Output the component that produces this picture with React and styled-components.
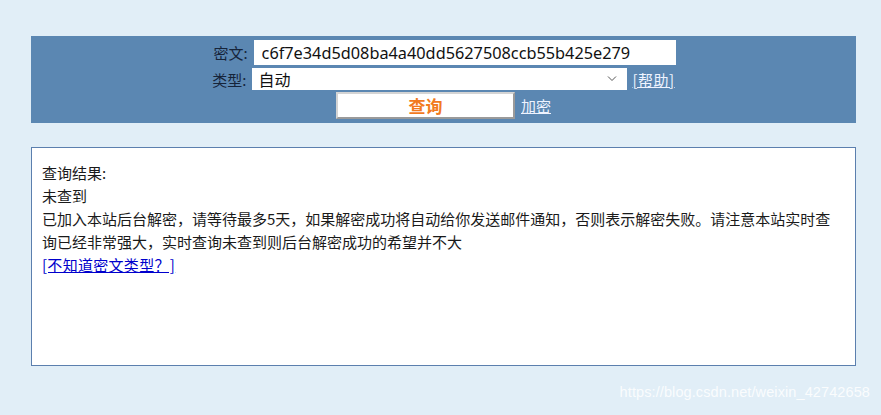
import React from "react";
import styled, { createGlobalStyle } from "styled-components";

const Global = createGlobalStyle`
  html, body { margin: 0; padding: 0; }
  body {
    background: #e1eef7;
    font-family: "Noto Sans CJK SC", "Noto Sans", sans-serif;
    color: #1b1b1b;
  }
`;

const Page = styled.div`
  position: relative;
  width: 881px;
  height: 415px;
  padding: 36px 25px 0 31px;
  box-sizing: border-box;
  display: flex;
  flex-direction: column;
  gap: 24px;
`;

const Panel = styled.form`
  background: #5b87b2;
  height: 87px;
  box-sizing: border-box;
  padding-top: 4px;
  display: flex;
  flex-direction: column;
  align-items: center;
`;

const Row = styled.div`
  display: flex;
  align-items: center;
  height: ${(p) => p.$h}px;
  margin-bottom: ${(p) => p.$mb || 0}px;
  gap: ${(p) => p.$gap || 0}px;
  transform: translateX(${(p) => p.$dx || 0}px);
`;

const Label = styled.label`
  font-size: 15px;
  line-height: 1;
  color: #16243a;
  margin-right: ${(p) => p.$mr}px;
`;

const TextInput = styled.input`
  width: 422px;
  height: 25px;
  box-sizing: border-box;
  border: none;
  outline: none;
  background: #fff;
  padding: 0 0 0 8px;
  font-family: "Noto Sans", sans-serif;
  font-size: 16.3px;
  color: #111;
`;

const SelectBox = styled.div`
  position: relative;
  width: 375px;
  height: 22px;
  background: #fff;
  display: flex;
  align-items: center;
  padding-left: 7px;
  box-sizing: border-box;
  font-size: 16px;
  color: #111;
`;

const Chevron = styled.svg`
  position: absolute;
  right: 10px;
  top: 7px;
`;

const Link = styled.a`
  font-size: ${(p) => p.$fs || 15}px;
  color: ${(p) => p.$color || "#eef3ff"};
  text-decoration: underline;
  cursor: pointer;
  line-height: 1;
  margin-left: ${(p) => p.$ml || 0}px;
`;

const QueryButton = styled.button`
  width: 179px;
  height: 27px;
  box-sizing: border-box;
  background: #fff;
  border: 2px solid #d4d4d4;
  border-right-color: #9a9a9a;
  border-bottom-color: #9a9a9a;
  font-family: "Noto Sans CJK SC", sans-serif;
  font-weight: 700;
  font-size: 17px;
  color: #f27a1e;
  padding: 0;
  line-height: 1;
`;

const Result = styled.div`
  height: 219px;
  box-sizing: border-box;
  background: #fff;
  border: 1px solid #5b7fae;
  padding: 13px 20px 10px 10px;
  font-size: 15px;
  line-height: 23px;
  color: #1a1a1a;
`;

const Line = styled.div``;

const Watermark = styled.div`
  position: absolute;
  right: 11px;
  top: 384px;
  font-family: "Liberation Sans", Arial, sans-serif;
  font-size: 14.5px;
  color: rgba(255, 255, 255, 0.85);
  letter-spacing: 0.1px;
`;

export default function App() {
  return (
    <>
      <Global />
      <Page>
        <Panel onSubmit={(e) => e.preventDefault()}>
          <Row $h={25} $mb={3} $dx={1}>
            <Label $mr={6}>密文:</Label>
            <TextInput defaultValue="c6f7e34d5d08ba4a40dd5627508ccb55b425e279" />
          </Row>
          <Row $h={22} $mb={2}>
            <Label $mr={5}>类型:</Label>
            <SelectBox>
              自动
              <Chevron width="10" height="7" viewBox="0 0 10 7">
                <path d="M1 1.5 L5 5.5 L9 1.5" fill="none" stroke="#555" strokeWidth="1" />
              </Chevron>
            </SelectBox>
            <Link $ml={6} style={{ letterSpacing: "0.5px" }}>[帮助]</Link>
          </Row>
          <Row $h={27} $gap={6}>
            <QueryButton type="button">查询</QueryButton>
            <Link>加密</Link>
          </Row>
        </Panel>
        <Result>
          <Line>查询结果:</Line>
          <Line>未查到</Line>
          <Line>
            已加入本站后台解密，请等待最多5天，如果解密成功将自动给你发送邮件通知，否则表示解密失败。请注意本站实时查询已经非常强大，实时查询未查到则后台解密成功的希望并不大
          </Line>
          <Line>
            <Link $color="#0000cc" style={{ letterSpacing: "0.3px" }}>[不知道密文类型？]</Link>
          </Line>
        </Result>
        <Watermark>https://blog.csdn.net/weixin_42742658</Watermark>
      </Page>
    </>
  );
}
